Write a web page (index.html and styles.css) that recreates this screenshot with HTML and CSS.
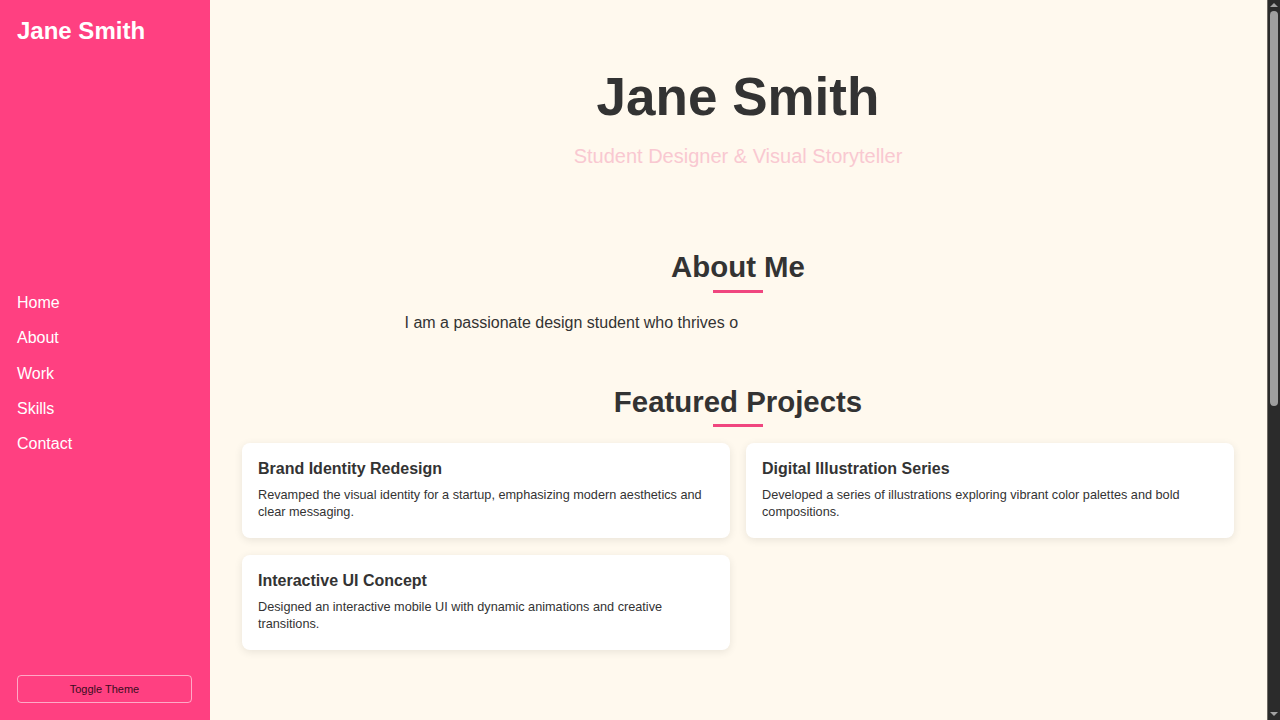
FILE: index.html
```html
<!DOCTYPE html>
<html lang="en">
<head>
<meta charset="utf-8">
<title>Jane Smith — Portfolio</title>
<link rel="stylesheet" href="styles.css">
</head>
<body>
<div class="layout">
  <aside class="sidebar">
    <div class="brand">Jane Smith</div>
    <nav class="nav">
      <a href="#home">Home</a>
      <a href="#about">About</a>
      <a href="#work">Work</a>
      <a href="#skills">Skills</a>
      <a href="#contact">Contact</a>
    </nav>
    <button class="toggle" type="button">Toggle Theme</button>
  </aside>
  <main class="main">
    <header class="hero" id="home">
      <h1>Jane Smith</h1>
      <p class="tagline">Student Designer &amp; Visual Storyteller</p>
    </header>

    <section class="section" id="about">
      <h2 class="section-title">About Me</h2>
      <div class="about-wrap">
        <p class="typing">I am a passionate design student who thrives on turning ideas into visual stories.</p>
      </div>
    </section>

    <section class="section" id="work">
      <h2 class="section-title">Featured Projects</h2>
      <div class="grid">
        <article class="card">
          <h3>Brand Identity Redesign</h3>
          <p>Revamped the visual identity for a startup, emphasizing modern aesthetics and clear messaging.</p>
        </article>
        <article class="card">
          <h3>Digital Illustration Series</h3>
          <p>Developed a series of illustrations exploring vibrant color palettes and bold compositions.</p>
        </article>
        <article class="card">
          <h3>Interactive UI Concept</h3>
          <p>Designed an interactive mobile UI with dynamic animations and creative transitions.</p>
        </article>
      </div>
    </section>

    <section class="section" id="skills">
      <h2 class="section-title">Skills</h2>
      <ul class="skills">
        <li>Adobe Photoshop</li>
        <li>Illustrator</li>
        <li>Figma</li>
        <li>Typography</li>
        <li>Motion Design</li>
      </ul>
    </section>

    <section class="section contact" id="contact">
      <h2 class="section-title">Contact</h2>
      <p class="contact-text">Let's create something beautiful together — jane.smith@example.com</p>
    </section>
  </main>
  <div class="scrollbar" aria-hidden="true">
    <span class="sb-arrow sb-up"></span>
    <span class="sb-thumb"></span>
    <span class="sb-arrow sb-down"></span>
  </div>
</div>
</body>
</html>
```

FILE: styles.css
```css
* {
  box-sizing: border-box;
}

html,
body {
  height: 100%;
}

body {
  margin: 0;
  overflow: hidden;
  background: #fff9ee;
  color: #333333;
  font-family: "Liberation Sans", Arial, sans-serif;
}

.layout {
  display: flex;
  height: 100vh;
}

.sidebar {
  flex: 0 0 210px;
  height: 100%;
  background: #ff4081;
  padding: 17px;
  display: flex;
  flex-direction: column;
}

.brand {
  color: #ffffff;
  font-size: 24px;
  font-weight: bold;
  line-height: 28px;
}

.nav {
  display: flex;
  flex-direction: column;
  gap: 17px;
  margin-top: 249px;
}

.nav a {
  color: #ffffff;
  text-decoration: none;
  font-size: 16px;
  line-height: 18.25px;
}

.toggle {
  margin-top: auto;
  width: 175px;
  height: 28px;
  background: transparent;
  border: 1px solid rgba(255, 255, 255, 0.55);
  border-radius: 4px;
  color: #3a0c20;
  font-family: "Liberation Sans", Arial, sans-serif;
  font-size: 11px;
  padding: 0;
}

.main {
  flex: 1;
  min-width: 0;
  height: 100%;
  overflow-y: auto;
  scrollbar-width: none;
  padding: 0 33px 60px 32px;
}

.main::-webkit-scrollbar {
  display: none;
}

.scrollbar {
  flex: 0 0 13px;
  height: 100%;
  background: #2b2b2b;
  border-left: 1px solid #6e6a64;
  display: flex;
  flex-direction: column;
  align-items: center;
  padding: 3px 0 4px;
}

.sb-arrow {
  width: 0;
  height: 0;
  border-left: 4px solid transparent;
  border-right: 4px solid transparent;
}

.sb-up {
  border-bottom: 4px solid #a3a3a3;
}

.sb-down {
  margin-top: auto;
  border-top: 4px solid #a3a3a3;
}

.sb-thumb {
  margin-top: 4px;
  width: 8px;
  height: 395px;
  border-radius: 4px;
  background: #9f9f9f;
}

.hero {
  text-align: center;
  padding-top: 66px;
  padding-bottom: 50px;
}

.hero h1 {
  margin: 0;
  font-size: 53px;
  line-height: 62px;
  font-weight: bold;
  color: #333333;
}

.tagline {
  margin: 16px 0 0;
  font-size: 20px;
  line-height: 24px;
  color: #f9c8d1;
}

.section {
  margin-top: 32px;
}

.section-title {
  margin: 0;
  text-align: center;
  font-size: 29.4px;
  line-height: 34px;
  font-weight: bold;
  color: #333333;
  display: flex;
  flex-direction: column;
  align-items: center;
}

.section-title::after {
  content: "";
  display: block;
  width: 50px;
  height: 3px;
  margin-top: 6px;
  background: #f0467f;
}

.about-wrap {
  width: 667px;
  margin: 20px auto 0;
}

.typing {
  margin: 0;
  width: 50%;
  overflow: hidden;
  white-space: nowrap;
  font-size: 16px;
  line-height: 20px;
}

#work {
  margin-top: 52px;
}

#work .section-title::after {
  margin-top: 5px;
}

.grid {
  margin-top: 16px;
  display: grid;
  grid-template-columns: 1fr 1fr;
  gap: 17px 16px;
}

.card {
  background: #ffffff;
  border-radius: 8px;
  padding: 16px 16px 17px;
  box-shadow: 0 2px 8px rgba(0, 0, 0, 0.09);
}

.card h3 {
  margin: 0;
  font-size: 16px;
  line-height: 20px;
  font-weight: bold;
  color: #333333;
}

.card p {
  margin: 8px 0 0;
  font-size: 12.7px;
  line-height: 17px;
  color: #333333;
}

#skills {
  margin-top: 70px;
}

.skills {
  list-style: none;
  margin: 24px 0 0;
  padding: 0;
  display: flex;
  flex-wrap: wrap;
  justify-content: center;
  gap: 12px;
}

.skills li {
  background: #ffffff;
  border-radius: 20px;
  padding: 8px 18px;
  font-size: 14px;
  box-shadow: 0 2px 8px rgba(0, 0, 0, 0.08);
}

.contact {
  margin-top: 80px;
  padding-bottom: 120px;
}

.contact-text {
  text-align: center;
  font-size: 16px;
  margin: 24px 0 0;
}
```
